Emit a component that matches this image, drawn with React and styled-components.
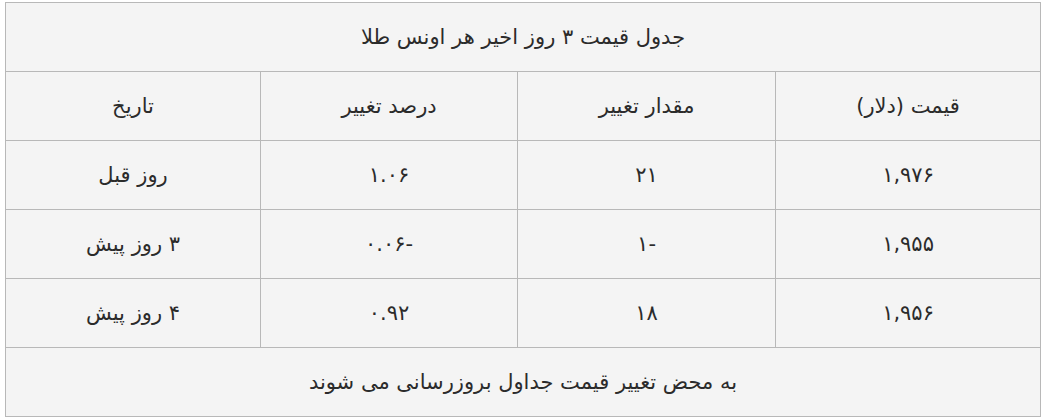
import React from "react";
import styled, { createGlobalStyle } from "styled-components";

const rows = [
  { price: "۱,۹۷۶", change: "۲۱", percent: "۱.۰۶", date: "روز قبل" },
  { price: "۱,۹۵۵", change: "-۱", percent: "-۰.۰۶", date: "۳ روز پیش" },
  { price: "۱,۹۵۶", change: "۱۸", percent: "۰.۹۲", date: "۴ روز پیش" },
];

const App = () => {
  return (
    <>
      <GlobalStyle />
      <Wrapper>
        <Table>
          <colgroup>
            <Col $w={265} />
            <Col $w={258} />
            <Col $w={257} />
            <Col $w={255} />
          </colgroup>
          <tbody>
            <tr>
              <Cell colSpan={4}>جدول قیمت ۳ روز اخیر هر اونس طلا</Cell>
            </tr>
            <tr>
              <Cell>قیمت (دلار)</Cell>
              <Cell>مقدار تغییر</Cell>
              <Cell>درصد تغییر</Cell>
              <Cell>تاریخ</Cell>
            </tr>
            {rows.map((r) => (
              <tr key={r.date}>
                <Cell>{r.price}</Cell>
                <Cell>{r.change}</Cell>
                <Cell>{r.percent}</Cell>
                <Cell>{r.date}</Cell>
              </tr>
            ))}
            <tr>
              <Cell colSpan={4}>به محض تغییر قیمت جداول بروزرسانی می شوند</Cell>
            </tr>
          </tbody>
        </Table>
      </Wrapper>
    </>
  );
};

const GlobalStyle = createGlobalStyle`
  body {
    margin: 0;
    background: #ffffff;
  }
`;

const Wrapper = styled.div`
  padding: 2px 4px 0 5px;
  font-family: "DejaVu Sans", sans-serif;
`;

const Table = styled.table`
  direction: rtl;
  width: 1036px;
  border-collapse: collapse;
  table-layout: fixed;
  background: #f4f4f4;
  color: #2b2b2b;
`;

const Col = styled.col`
  width: ${(p) => p.$w}px;
`;

const Cell = styled.td`
  height: 69px;
  padding: 0 8px;
  border: 1px solid #b8b8b8;
  text-align: center;
  vertical-align: middle;
  font-size: 21px;
  box-sizing: border-box;
`;

export default App;
